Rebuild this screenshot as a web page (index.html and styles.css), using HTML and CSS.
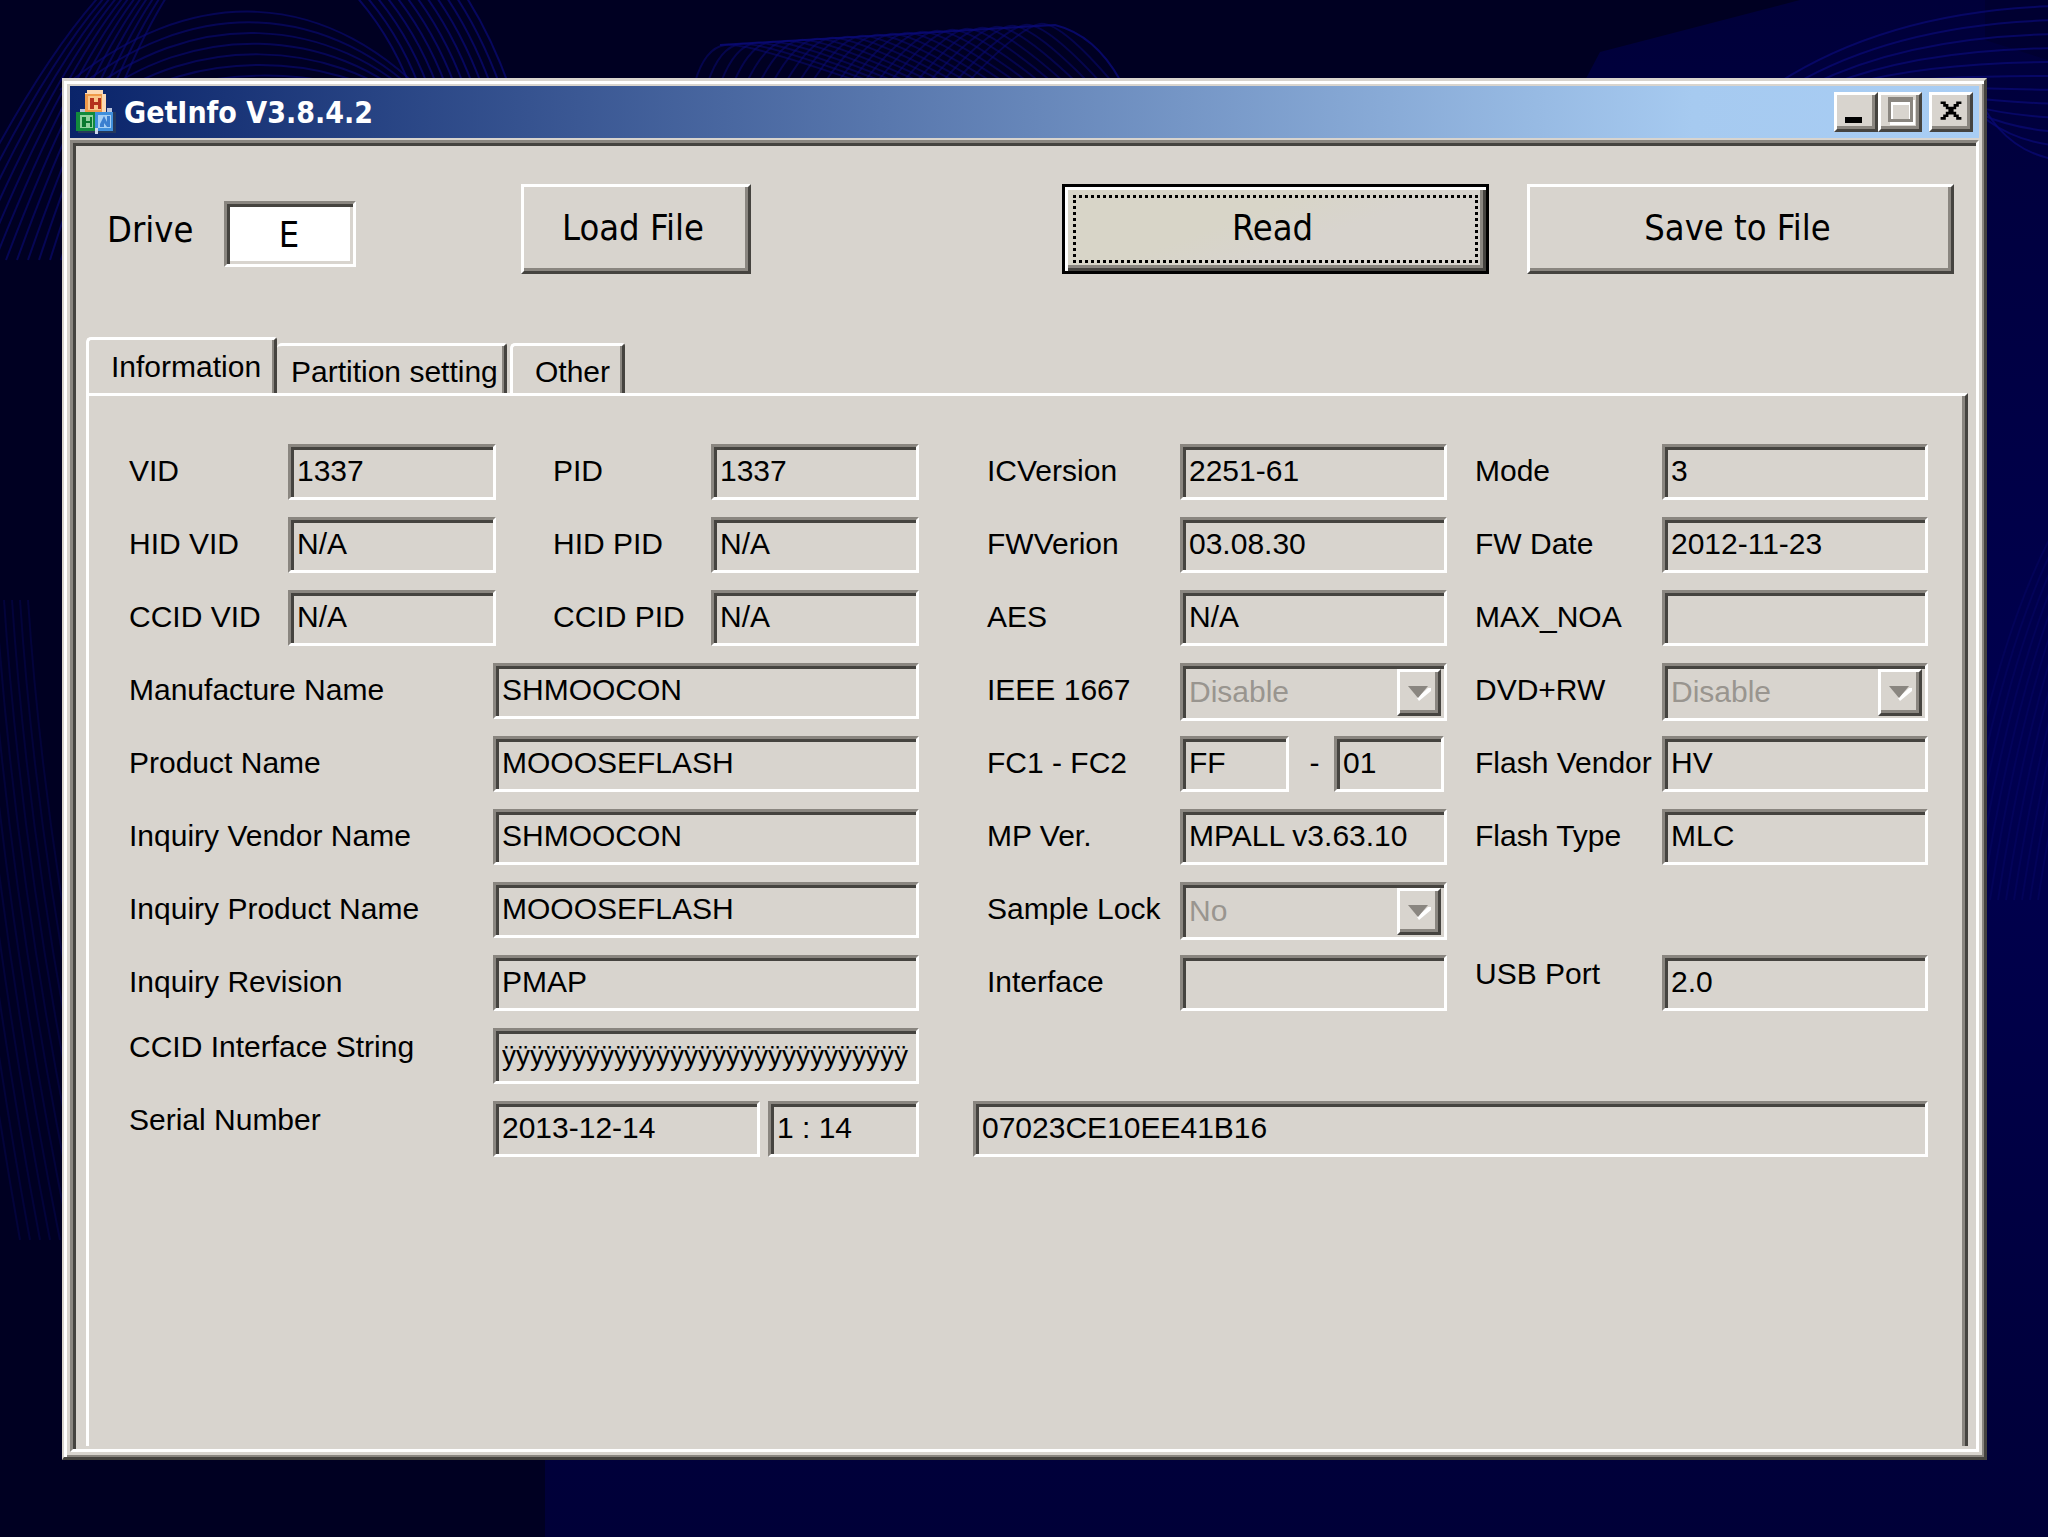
FILE: index.html
```
<!DOCTYPE html>
<html lang="en">
<head>
  <meta charset="UTF-8">
  <title>GetInfo V3.8.4.2</title>
  <link rel="stylesheet" href="styles.css">
</head>

<body>
  <svg class="wallpaper" id="wallpaper" viewBox="0 0 2048 1537" preserveAspectRatio="none" aria-hidden="true">
    <defs>
      <linearGradient id="glow" x1="0" y1="0" x2="0" y2="1">
        <stop offset="0" stop-color="#00003a"/>
        <stop offset="0.5" stop-color="#000050"/>
        <stop offset="1" stop-color="#000038"/>
      </linearGradient>
    </defs>
    <path fill="url(#glow)" d="M1600 52 L1800 0 H2048 V1537 H545 V1400 L1100 1000 Z"/>
    <path fill="#000028" d="M1985 0 H2048 V60 L1985 40 Z" opacity="0.5"/>
    <g id="waves" fill="none" stroke="#0a0a78" stroke-width="2"></g>
  </svg>

  <main class="window">
    <header class="title-bar">
      <svg class="app-icon" viewBox="0 0 40 44">
        <path fill="#fbd9b4" d="M11 0h16v4h3v18H9V3h2z"/>
        <path fill="#ef9a4a" d="M9 4h17v18H9z"/>
        <path fill="#f9c58a" d="M12 6h13v14H12z"/>
        <path fill="#b5321e" d="M14 8h4v4h4V8h3v11h-3v-4h-4v4h-4z"/>
        <path fill="#b9c3dc" d="M4 19h5v3H4zM31 18h5v4h-5z"/>
        <path fill="#25385c" d="M2 40h38v3H2zM37 22h3v20h-3z"/>
        <path fill="#128a3c" d="M0 22h19v19H0z"/>
        <path fill="#93d3a0" d="M4 25h13v13H4z"/>
        <path fill="#0b7a30" d="M6 27h4v4h4v-4h2v10h-2v-4h-4v4H6z"/>
        <path fill="#3f8fdc" d="M19 22h18v19H19z"/>
        <path fill="#a5cff5" d="M22 25h13v13H22z"/>
        <path fill="#3b7fd0" d="M24 34l4-8 3 6V26h3v11h-3l-3-4v4h-4z"/>
        <path fill="#c9d6ea" d="M19 38h3v6h-3z"/>
      </svg>
      <h1>GetInfo V3.8.4.2</h1>
      <button class="caption-button" aria-label="Minimize">
        <svg viewBox="0 0 30 30"><path d="M4 21h17v6H4z"/></svg>
      </button>
      <button class="caption-button" aria-label="Maximize" disabled>
        <svg viewBox="0 0 30 30">
          <path fill="#fff" d="M5 4h25v25H5z"/>
          <path fill="#8a8680" d="M3 1h25v25H3z"/>
          <path fill="#fff" d="M6 6h19v17H6z"/>
          <path fill="#d8d4ce" d="M8 9h16v14H8z"/>
        </svg>
      </button>
      <button class="caption-button close" aria-label="Close">
        <svg viewBox="0 0 30 30"><path d="M3 4h6v3h3v3h6V7h3V4h6v3h-3v3h-3v3h-3v3h3v3h3v3h3v3h-6v-3h-3v-3h-6v3H9v3H3v-3h3v-3h3v-3h3v-3H9v-3H6V7H3z"/></svg>
      </button>
    </header>

    <div class="client">
      <div class="toolbar">
        <label class="drive-label" for="drive">Drive</label>
        <input class="drive-input" id="drive" type="text" value="E">
        <button class="button load">Load File</button>
        <button class="button read">Read</button>
        <button class="button save">Save to File</button>
      </div>

      <div class="tabs" role="tablist">
        <button class="tab active" role="tab" aria-selected="true">Information</button>
        <button class="tab setting" role="tab">Partition setting</button>
        <button class="tab other" role="tab">Other</button>
      </div>

      <form class="tab-page">
        <div class="columns">
          <div class="left">
            <div class="row ids">
              <label for="vid">VID</label>
              <input class="field" id="vid" value="1337" readonly>
              <label class="second" for="pid">PID</label>
              <input class="field" id="pid" value="1337" readonly>
            </div>
            <div class="row ids">
              <label for="hid-vid">HID VID</label>
              <input class="field" id="hid-vid" value="N/A" readonly>
              <label class="second" for="hid-pid">HID PID</label>
              <input class="field" id="hid-pid" value="N/A" readonly>
            </div>
            <div class="row ids">
              <label for="ccid-vid">CCID VID</label>
              <input class="field" id="ccid-vid" value="N/A" readonly>
              <label class="second" for="ccid-pid">CCID PID</label>
              <input class="field" id="ccid-pid" value="N/A" readonly>
            </div>
            <div class="row names">
              <label for="manufacture">Manufacture Name</label>
              <input class="field" id="manufacture" value="SHMOOCON" readonly>
            </div>
            <div class="row names">
              <label for="product">Product Name</label>
              <input class="field" id="product" value="MOOOSEFLASH" readonly>
            </div>
            <div class="row names">
              <label for="inq-vendor">Inquiry Vendor Name</label>
              <input class="field" id="inq-vendor" value="SHMOOCON" readonly>
            </div>
            <div class="row names">
              <label for="inq-product">Inquiry Product Name</label>
              <input class="field" id="inq-product" value="MOOOSEFLASH" readonly>
            </div>
            <div class="row names">
              <label for="inq-revision">Inquiry Revision</label>
              <input class="field" id="inq-revision" value="PMAP" readonly>
            </div>
            <div class="row names">
              <label class="raised" for="ccid-string">CCID Interface String</label>
              <input class="field dense" id="ccid-string" value="ÿÿÿÿÿÿÿÿÿÿÿÿÿÿÿÿÿÿÿÿÿÿÿÿÿÿÿÿÿ" readonly>
            </div>
          </div>

          <div class="right">
            <div class="row specs">
              <label for="ic-version">ICVersion</label>
              <input class="field" id="ic-version" value="2251-61" readonly>
              <label class="second" for="mode">Mode</label>
              <input class="field" id="mode" value="3" readonly>
            </div>
            <div class="row specs">
              <label for="fw-version">FWVerion</label>
              <input class="field" id="fw-version" value="03.08.30" readonly>
              <label class="second" for="fw-date">FW Date</label>
              <input class="field" id="fw-date" value="2012-11-23" readonly>
            </div>
            <div class="row specs">
              <label for="aes">AES</label>
              <input class="field" id="aes" value="N/A" readonly>
              <label class="second" for="max-noa">MAX_NOA</label>
              <input class="field" id="max-noa" value="" readonly>
            </div>
            <div class="row specs">
              <label for="ieee">IEEE 1667</label>
              <div class="combo">
                <select class="field" id="ieee" disabled><option>Disable</option></select>
                <span class="arrow"><svg viewBox="0 0 24 16"><path fill="#fff" d="M21 3h3v3L12 16l-2-3z"/><path fill="#8a8680" d="M1 1h20L11 13z"/></svg></span>
              </div>
              <label class="second" for="dvd">DVD+RW</label>
              <div class="combo">
                <select class="field" id="dvd" disabled><option>Disable</option></select>
                <span class="arrow"><svg viewBox="0 0 24 16"><path fill="#fff" d="M21 3h3v3L12 16l-2-3z"/><path fill="#8a8680" d="M1 1h20L11 13z"/></svg></span>
              </div>
            </div>
            <div class="row specs">
              <label for="fc1">FC1 - FC2</label>
              <div class="pair">
                <input class="field" id="fc1" value="FF" readonly>
                <label for="fc2">-</label>
                <input class="field" id="fc2" value="01" readonly>
              </div>
              <label class="second" for="flash-vendor">Flash Vendor</label>
              <input class="field" id="flash-vendor" value="HV" readonly>
            </div>
            <div class="row specs">
              <label for="mp-ver">MP Ver.</label>
              <input class="field" id="mp-ver" value="MPALL v3.63.10" readonly>
              <label class="second" for="flash-type">Flash Type</label>
              <input class="field" id="flash-type" value="MLC" readonly>
            </div>
            <div class="row specs">
              <label for="sample-lock">Sample Lock</label>
              <div class="combo">
                <select class="field" id="sample-lock" disabled><option>No</option></select>
                <span class="arrow"><svg viewBox="0 0 24 16"><path fill="#fff" d="M21 3h3v3L12 16l-2-3z"/><path fill="#8a8680" d="M1 1h20L11 13z"/></svg></span>
              </div>
            </div>
            <div class="row specs">
              <label for="interface">Interface</label>
              <input class="field" id="interface" value="" readonly>
              <label class="second raised" for="usb-port">USB Port</label>
              <input class="field" id="usb-port" value="2.0" readonly>
            </div>
          </div>
        </div>

        <div class="row serial">
          <label class="raised" for="serial-date">Serial Number</label>
          <input class="field" id="serial-date" value="2013-12-14" readonly>
          <input class="field time" value="1 : 14" aria-label="Serial time" readonly>
          <input class="field code" value="07023CE10EE41B16" aria-label="Serial code" readonly>
        </div>
      </form>
    </div>
  </main>

  <script src="wallpaper.js"></script>
</body>
</html>
```
FILE: styles.css
```
* {
  box-sizing: border-box;
}

body {
  margin: 0;
  min-height: 100vh;
  padding: 78px 61px 77px 62px;
  display: flex;
  background: #000022;
  font-family: "Liberation Sans", Arial, sans-serif;
  font-size: 30px;
  color: #000;
}

input, select, button {
  font: inherit;
  color: inherit;
  margin: 0;
  border-radius: 0;
}

.wallpaper {
  position: fixed;
  inset: 0;
  width: 100%;
  height: 100%;
  z-index: -1;
}

/* window frame */
.window {
  flex: 1;
  display: flex;
  flex-direction: column;
  gap: 2px;
  padding: 5px 5px 5px 6px;
  background: #d8d4ce;
  border: 3px solid;
  border-left-width: 2px;
  border-color: #d8d4ce #45433f #45433f #d8d4ce;
  box-shadow: inset 3px 3px 0 #fff, inset -2px -2px 0 #8a8680;
}

.title-bar {
  display: flex;
  align-items: center;
  height: 52px;
  padding: 0 6px;
  background: linear-gradient(to right, #0a246a, #a6caf0 85%, #a8cdf4);
}

.title-bar h1 {
  flex: 1;
  margin: 0 0 0 8px;
  font: bold 30px "DejaVu Sans Condensed", "DejaVu Sans", sans-serif;
  color: #fff;
}

.app-icon {
  width: 40px;
  height: 44px;
}

.caption-button {
  width: 44px;
  height: 40px;
  padding: 0 4px 2px;
  display: flex;
  align-items: center;
  justify-content: center;
  background: #d8d4ce;
  border: 3px solid;
  border-color: #fff #45433f #45433f #fff;
  box-shadow: inset -3px -3px 0 #8a8680;
}

.caption-button svg {
  width: 30px;
  height: 30px;
  flex: none;
}

.caption-button.close {
  margin-left: 7px;
}

.caption-button.close svg {
  width: 28px;
  height: 26px;
}

.client {
  flex: 1;
  display: flex;
  flex-direction: column;
  padding: 0 8px 3px 13px;
  border: 3px solid;
  border-color: #8a8680 #fff #fff #8a8680;
  box-shadow: inset 3px 3px 0 #45433f;
}

/* drive and file buttons */
.toolbar {
  display: grid;
  grid-template-columns: 117fr 132fr 165fr 230fr 311fr 427fr 38fr 427fr;
  padding: 41px 14px 63px 21px;
  font: 36px "DejaVu Sans Condensed", "DejaVu Sans", sans-serif;
}

.drive-label {
  align-self: center;
}

.drive-input {
  width: 100%;
  height: 66px;
  align-self: center;
  margin-top: 10px;
  padding: 0 6px 0 4px;
  text-align: center;
  background: #fff;
  border: 3px solid;
  border-color: #8a8680 #fff #fff #8a8680;
  box-shadow: inset 3px 3px 0 #45433f, inset -3px -3px 0 #d8d4ce;
}

.button {
  height: 90px;
  padding: 0 6px 3px 0;
  background: #d8d4ce;
  border: 3px solid;
  border-color: #fff #45433f #45433f #fff;
  box-shadow: inset -3px -3px 0 #8a8680;
}

.load {
  grid-column: 4;
}

.read {
  grid-column: 6;
  background: linear-gradient(160deg, #d8d5c8 40%, #d8d4ce 60%);
  border-color: #000;
  box-shadow: inset 3px 3px 0 #fff, inset -3px -3px 0 #45433f, inset -6px -6px 0 #8a8680;
  outline: 3px dotted #000;
  outline-offset: -14px;
}

.save {
  grid-column: 8;
}

/* tabs */
.tabs {
  display: flex;
  align-items: flex-end;
}

.tab {
  height: 50px;
  padding: 4px 0 0;
  background: #d8d4ce;
  border: 3px solid;
  border-color: #fff #45433f #fff #fff;
  border-bottom: 0;
  border-radius: 5px 3px 0 0;
  box-shadow: inset -2px 0 0 #8a8680;
  text-align: left;
  white-space: nowrap;
}

.tab.active {
  width: 191px;
  height: 56px;
  padding: 0 0 0 22px;
}

.tab.setting {
  width: 230px;
  padding-left: 14px;
  border-left: 0;
}

.tab.other {
  width: 115px;
  margin-left: 3px;
  padding-left: 22px;
}

.tab-page {
  flex: 1;
  padding: 48px 37px 48px 40px;
  border: 3px solid;
  border-color: #fff #45433f transparent #fff;
  border-bottom: 0;
  box-shadow: inset -3px 0 0 #8a8680;
}

/* information fields */
.columns {
  display: grid;
  grid-template-columns: 790fr 941fr;
  column-gap: 68px;
}

.row {
  display: grid;
  height: 56px;
  margin-bottom: 17px;
}

.ids {
  grid-template-columns: 159fr 208fr 57fr 158fr 208fr;
}

.names {
  grid-template-columns: 364fr 426fr;
}

.specs {
  grid-template-columns: 193fr 267fr 28fr 187fr 266fr;
}

.serial {
  grid-template-columns: 364fr 267fr 8fr 151fr 54fr 955fr;
}

.second {
  grid-column: 4;
}

.time {
  grid-column: 4;
}

.code {
  grid-column: 6;
}

.row label {
  line-height: 54px;
  white-space: nowrap;
}

.row label.raised {
  line-height: 38px;
}

.field {
  width: 100%;
  min-width: 0;
  height: 56px;
  padding: 2px 3px 4px 6px;
  background: #d8d4ce;
  border: 3px solid;
  border-color: #8a8680 #fff #fff #8a8680;
  box-shadow: inset 3px 3px 0 #45433f;
}

.field.dense {
  padding-top: 4px;
  font-size: 28px;
}

.combo {
  position: relative;
}

.combo select {
  height: 58px;
  appearance: none;
  color: #99958f;
  opacity: 1;
}

.arrow {
  position: absolute;
  top: 6px;
  right: 6px;
  width: 44px;
  height: 47px;
  display: flex;
  align-items: center;
  justify-content: center;
  background: #d8d4ce;
  border: 3px solid;
  border-color: #fff #45433f #45433f #fff;
  box-shadow: inset -3px -3px 0 #8a8680;
}

.arrow svg {
  width: 24px;
  height: 16px;
}

.pair {
  display: grid;
  grid-template-columns: 109fr 45fr 110fr;
  padding-right: 3px;
}

.pair label {
  padding-left: 6px;
  text-align: center;
}
```
FILE: wallpaper.js
```
// thin wave lines behind the window
var waves = document.getElementById('waves');

function line(d, opacity) {
  var p = document.createElementNS('http://www.w3.org/2000/svg', 'path');
  p.setAttribute('d', d);
  p.setAttribute('opacity', opacity);
  waves.appendChild(p);
}

for (var i = 0; i < 12; i++) {
  // top left
  line('M' + (-60 + i * 11) + ' 260 Q' + (30 + i * 8) + ' 70 ' + (105 + i * 6) + ' -10', 0.6);
  line('M' + (60 + i * 10) + ' ' + (90 + i * 4) + ' C190 ' + (-20 + i * 14) + ' 330 ' + (-15 + i * 13) + ' ' + (440 - i * 6) + ' 110', 0.6);
  line('M' + (355 + i * 10) + ' -5 Q' + (395 + i * 9) + ' 40 ' + (415 + i * 9) + ' 100', 0.7);
  // top right
  line('M' + (1775 + i * 18) + ' 85 Q' + (1890 + i * 10) + ' ' + (10 + i * 13) + ' 2060 ' + (6 + i * 14), 0.7);
  // side edges
  line('M' + (-60 + i * 8) + ' 600 Q' + (-40 + i * 8) + ' 900 ' + (20 + i * 10) + ' 1240', 0.3);
  line('M' + (2060 + i * 8) + ' 520 Q' + (1990 + i * 8) + ' 640 ' + (1950 + i * 8) + ' 900', 0.3);
}

for (var j = 0; j < 22; j++) {
  line('M' + (695 + j * 13) + ' 82 Q' + (705 + j * 15) + ' ' + (48 - j) + ' ' + (725 + j * 15) + ' ' + (45 - j) + ' T' + (860 + j * 12) + ' 82', 0.5);
}
line('M720 45 L1055 25 Q1095 35 1120 80', 0.8);
```
